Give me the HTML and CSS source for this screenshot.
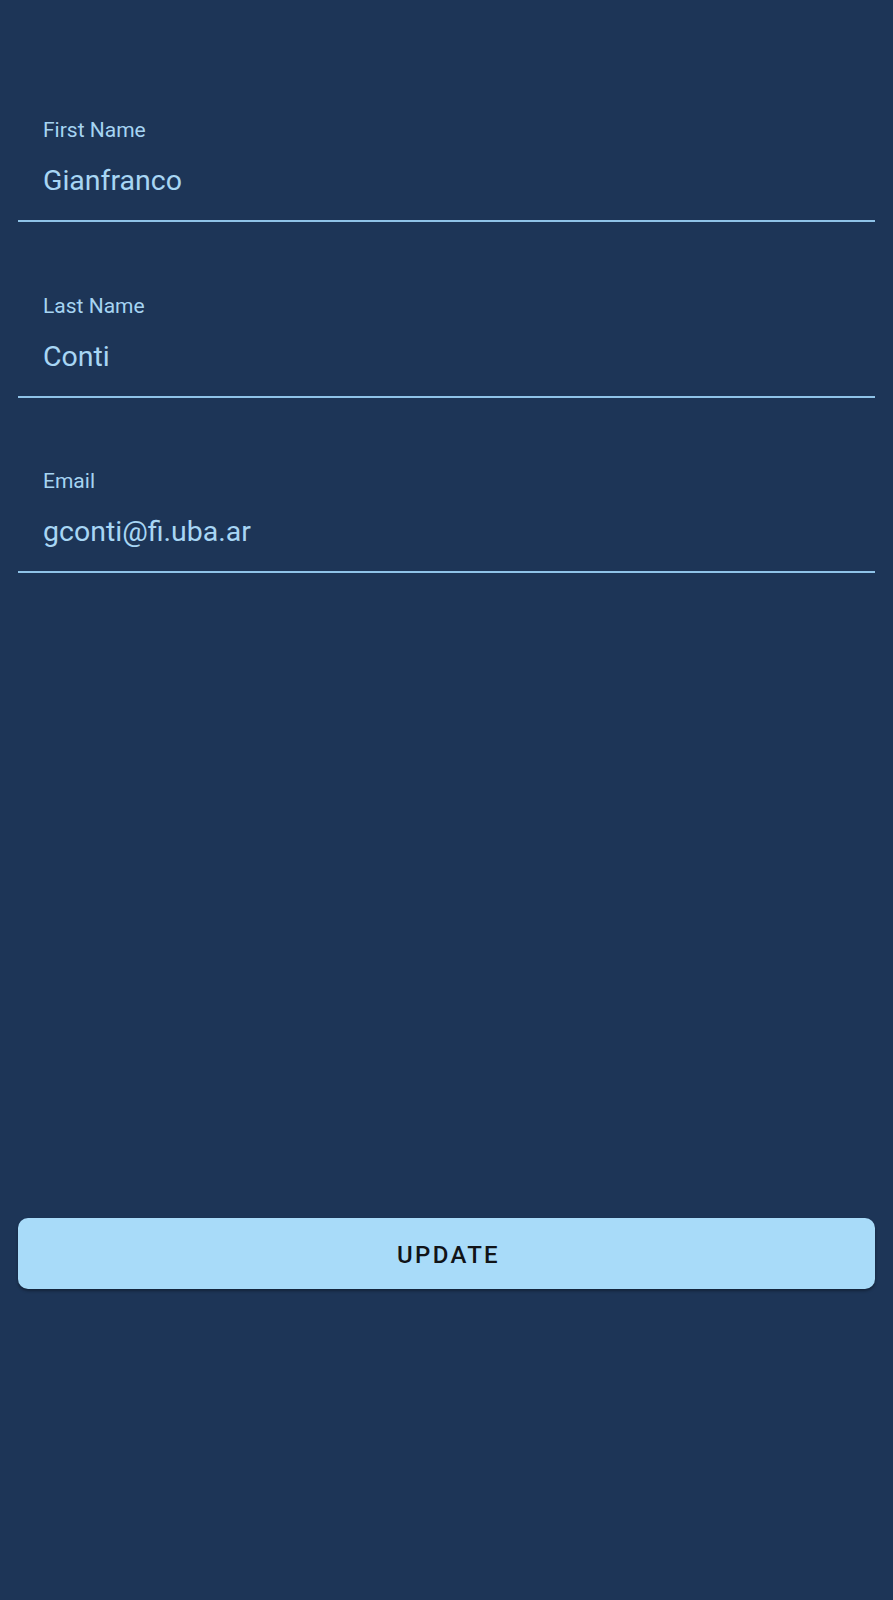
FILE: index.html
```html
<!DOCTYPE html>
<html lang="en">
<head>
<meta charset="utf-8">
<title>Profile</title>
<link rel="stylesheet" href="styles.css">
</head>
<body>
<main class="screen">
  <form class="form">
    <div class="field">
      <label class="field-label">First Name</label>
      <div class="field-value">Gianfranco</div>
    </div>
    <div class="field">
      <label class="field-label">Last Name</label>
      <div class="field-value">Conti</div>
    </div>
    <div class="field">
      <label class="field-label">Email</label>
      <div class="field-value">gconti@fi.uba.ar</div>
    </div>
  </form>
  <button class="update-btn" type="button">UPDATE</button>
</main>
</body>
</html>
```

FILE: styles.css
```css
html, body {
  margin: 0;
  padding: 0;
  background: #1d3557;
}

body {
  font-family: Roboto, "Noto Sans", "Liberation Sans", sans-serif;
  min-height: 1600px;
}

.screen {
  display: flex;
  flex-direction: column;
  padding: 0 18px;
}

.form {
  display: flex;
  flex-direction: column;
  padding-top: 118px;
  gap: 71.5px;
}

.field {
  display: flex;
  flex-direction: column;
  padding: 0 25px 23px;
  border-bottom: 2px solid #8fc3e8;
}

.field-label {
  font-size: 21px;
  line-height: 24px;
  color: #a6d4f2;
  margin-bottom: 20px;
}

.field-value {
  font-size: 28.5px;
  line-height: 32px;
  color: #a8d6f4;
  margin-top: 3px;
}

.update-btn {
  margin-top: 645px;
  height: 71px;
  border: none;
  border-radius: 10px;
  background: #a8dbf9;
  color: #111418;
  font-family: Roboto, "Noto Sans", "Liberation Sans", sans-serif;
  font-weight: 500;
  font-size: 24px;
  letter-spacing: 2.3px;
  padding: 2px 0 0 4px;
  box-shadow: 0 2px 3px rgba(0, 0, 0, 0.35);
}
```
